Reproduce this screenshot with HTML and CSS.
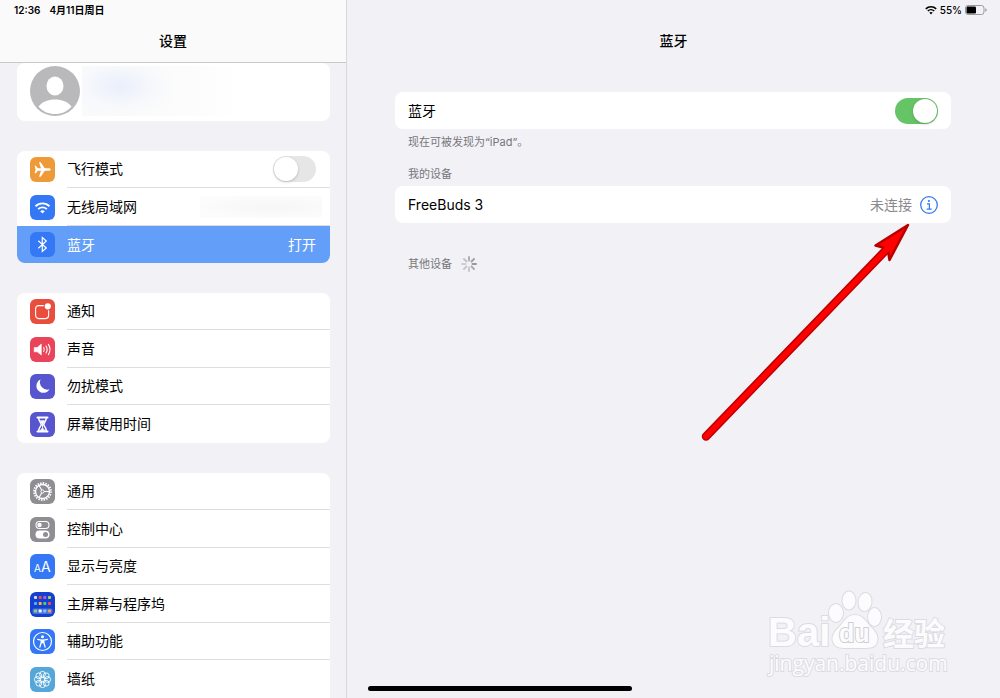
FILE: index.html
```html
<!DOCTYPE html>
<html lang="zh-CN">
<head>
    <meta charset="UTF-8">
    <meta name="viewport" content="width=device-width, initial-scale=1.0">
    <title>设置 - 蓝牙</title>
    <link rel="stylesheet" href="styles.css">
</head>

<body>
    <div class="sidebar">
        <header class="sidebar-header">
            <div class="status">
                <span>12:36</span>
                <span>4月11日周日</span>
            </div>
            <h1 class="title">设置</h1>
        </header>

        <nav class="menu">
            <a class="profile" href="#account" aria-label="Apple ID">
                <svg class="avatar" viewBox="0 0 50 50">
                    <circle cx="25" cy="25" r="25" fill="#b9b9bb"/>
                    <ellipse cx="25" cy="20" rx="8.5" ry="9.5" fill="#fff"/>
                    <path d="M8.5 40.500C12 36 18 33.500 25 33.500S38 36 41.500 40.500C37.500 45.500 31.500 48 25 48S12.500 45.500 8.500 40.500Z" fill="#fff"/>
                </svg>
                <span class="hidden-name"></span>
            </a>

            <div class="group">
                <div class="row">
                    <svg class="icon orange" viewBox="0 0 25 25">
                        <path fill="#fff" d="M20.800 12.500C20.800 11.700 19.500 11.200 18.300 11.200H14.800L10.700 5.200H9L11 11.200H7.700L6 8.800H4.700L5.600 12.500L4.700 16.200H6L7.700 13.800H11L9 19.800H10.700L14.800 13.800H18.300C19.500 13.800 20.800 13.300 20.800 12.500Z"/>
                    </svg>
                    <div class="cell">
                        <label for="airplane">飞行模式</label>
                        <input class="switch" type="checkbox" role="switch" id="airplane">
                    </div>
                </div>
                <a class="row" href="#wifi">
                    <svg class="icon blue" viewBox="0 0 25 25">
                        <g fill="none" stroke="#fff" stroke-width="1.900">
                            <path d="M5.500 11.200A10 10 0 0 1 19.500 11.200"/>
                            <path d="M8.200 14.100A6.200 6.200 0 0 1 16.800 14.100"/>
                        </g>
                        <path d="M10.200 16.200Q12.500 14.400 14.800 16.200L12.500 18.600Z" fill="#fff"/>
                    </svg>
                    <div class="cell">
                        <span>无线局域网</span>
                        <span class="hidden-network"></span>
                    </div>
                </a>
                <a class="row selected" href="#bluetooth" aria-current="page">
                    <svg class="icon blue" viewBox="0 0 25 25">
                        <path d="M8.300 8.800L16.300 16L12.300 19.500V5.500L16.300 9L8.300 16.200" fill="none" stroke="#fff" stroke-width="1.200"/>
                    </svg>
                    <div class="cell">
                        <span>蓝牙</span>
                        <span>打开</span>
                    </div>
                </a>
            </div>

            <div class="group">
                <a class="row" href="#notifications">
                    <svg class="icon red" viewBox="0 0 25 25">
                        <rect x="5.600" y="6.600" width="13" height="13" rx="3" fill="none" stroke="#fff" stroke-width="1.100"/>
                        <circle cx="17.800" cy="7.300" r="4.200" fill="#e94e3d"/>
                        <circle cx="17.800" cy="7.300" r="3.100" fill="#fff"/>
                    </svg>
                    <div class="cell"><span>通知</span></div>
                </a>
                <a class="row" href="#sounds">
                    <svg class="icon pink" viewBox="0 0 25 25">
                        <path d="M4.200 10.500H7.200L11.300 7V18L7.200 14.800H4.200Z" fill="#fff" stroke="#fff" stroke-width=".6" stroke-linejoin="round"/>
                        <g fill="none" stroke="#fff" stroke-width="1.100" stroke-linecap="round">
                            <path d="M13.700 10.600Q15 12.500 13.700 14.400"/>
                            <path d="M16 9Q18.300 12.500 16 16"/>
                            <path d="M18.400 7.400Q21.600 12.500 18.400 17.600"/>
                        </g>
                    </svg>
                    <div class="cell"><span>声音</span></div>
                </a>
                <a class="row" href="#dnd">
                    <svg class="icon indigo" viewBox="0 0 25 25">
                        <path d="M10.500 5.500A7 7 0 1 0 19.500 15.300A7.400 7.400 0 0 1 10.500 5.500Z" fill="#fff"/>
                    </svg>
                    <div class="cell"><span>勿扰模式</span></div>
                </a>
                <a class="row" href="#screen-time">
                    <svg class="icon indigo" viewBox="0 0 25 25">
                        <path d="M7.500 5.500H17.500M7.500 19.500H17.500" stroke="#fff" stroke-width="2" stroke-linecap="round"/>
                        <path d="M8.700 6C8.700 9.500 11.300 11 11.300 12.500S8.700 15.500 8.700 19M16.300 6C16.300 9.500 13.700 11 13.700 12.500S16.300 15.500 16.300 19" fill="none" stroke="#fff" stroke-width="1.500"/>
                        <path d="M10.300 8.700H14.700L12.500 12.500ZM12.500 12.500V16L15 18.700H10L12.500 16Z" fill="#fff" stroke="#fff" stroke-width=".7"/>
                    </svg>
                    <div class="cell"><span>屏幕使用时间</span></div>
                </a>
            </div>

            <div class="group group-last">
                <a class="row" href="#general">
                    <svg class="icon gray" viewBox="0 0 25 25">
                        <g fill="none" stroke="#fff">
                            <circle cx="12.500" cy="12.500" r="8.500" stroke-width="1.800" stroke-dasharray="1.500 1.167"/>
                            <circle cx="12.500" cy="12.500" r="7" stroke-width="1.400"/>
                            <path d="M14 12.500H19M11.800 11.200L9.200 6.700M11.800 13.800L9.200 18.300" stroke-width="1.100"/>
                            <circle cx="12.500" cy="12.500" r="1.600" stroke-width="1"/>
                        </g>
                    </svg>
                    <div class="cell"><span>通用</span></div>
                </a>
                <a class="row" href="#control-center">
                    <svg class="icon gray" viewBox="0 0 25 25">
                        <rect x="6" y="4.500" width="13" height="7" rx="3.500" fill="none" stroke="#fff" stroke-width="1.100"/>
                        <circle cx="9.500" cy="8" r="2.200" fill="#fff"/>
                        <rect x="5.500" y="13.500" width="14" height="8" rx="4" fill="#fff"/>
                        <circle cx="15.500" cy="17.500" r="2.500" fill="#8e8e93"/>
                    </svg>
                    <div class="cell"><span>控制中心</span></div>
                </a>
                <a class="row" href="#display">
                    <svg class="icon blue" viewBox="0 0 25 25">
                        <text class="small-a" x="4" y="18">A</text>
                        <text class="large-a" x="11" y="18">A</text>
                    </svg>
                    <div class="cell"><span>显示与亮度</span></div>
                </a>
                <a class="row" href="#home-screen">
                    <svg class="icon navy" viewBox="0 0 25 25">
                        <rect x="2.500" y="16.500" width="20" height="5.500" rx="1.500" fill="#4d70df"/>
                        <g>
                            <rect x="4" y="4" width="3" height="3" rx=".7" fill="#d7dcda"/>
                            <rect x="8.700" y="4" width="3" height="3" rx=".7" fill="#ef4d4b"/>
                            <rect x="13.300" y="4" width="3" height="3" rx=".7" fill="#b15ce5"/>
                            <rect x="18" y="4" width="3" height="3" rx=".7" fill="#a6cf54"/>
                            <rect x="4" y="10" width="3" height="3" rx=".7" fill="#48b5ef"/>
                            <rect x="8.700" y="10" width="3" height="3" rx=".7" fill="#f1b33f"/>
                            <rect x="13.300" y="10" width="3" height="3" rx=".7" fill="#68c367"/>
                            <rect x="18" y="10" width="3" height="3" rx=".7" fill="#ee4e43"/>
                            <rect x="4" y="17.500" width="3" height="3" rx=".7" fill="#81d675"/>
                            <rect x="8.700" y="17.500" width="3" height="3" rx=".7" fill="#f5f5f5"/>
                            <rect x="13.300" y="17.500" width="3" height="3" rx=".7" fill="#79c8f5"/>
                            <rect x="18" y="17.500" width="3" height="3" rx=".7" fill="#f4a250"/>
                        </g>
                    </svg>
                    <div class="cell"><span>主屏幕与程序坞</span></div>
                </a>
                <a class="row" href="#accessibility">
                    <svg class="icon blue" viewBox="0 0 25 25">
                        <circle cx="12.500" cy="12.500" r="9" fill="none" stroke="#fff" stroke-width="1.200"/>
                        <circle cx="12.500" cy="7.700" r="1.500" fill="#fff"/>
                        <path d="M7.700 10.400L11.200 11.100V13.500L9.900 18.200M17.300 10.400L13.800 11.100V13.500L15.100 18.200" fill="none" stroke="#fff" stroke-width="1.300" stroke-linecap="round" stroke-linejoin="round"/>
                        <path d="M11 10.500H14V14.200H11Z" fill="#fff"/>
                    </svg>
                    <div class="cell"><span>辅助功能</span></div>
                </a>
                <a class="row" href="#wallpaper">
                    <svg class="icon sky" viewBox="0 0 25 25">
                        <g fill="none" stroke="#fff" stroke-width=".9">
                            <circle cx="12.500" cy="12.500" r="2.200"/>
                            <circle cx="17.700" cy="12.500" r="2.900"/>
                            <circle cx="16.200" cy="16.200" r="2.900"/>
                            <circle cx="12.500" cy="17.700" r="2.900"/>
                            <circle cx="8.800" cy="16.200" r="2.900"/>
                            <circle cx="7.300" cy="12.500" r="2.900"/>
                            <circle cx="8.800" cy="8.800" r="2.900"/>
                            <circle cx="12.500" cy="7.300" r="2.900"/>
                            <circle cx="16.200" cy="8.800" r="2.900"/>
                        </g>
                    </svg>
                    <div class="cell"><span>墙纸</span></div>
                </a>
            </div>
        </nav>
    </div>

    <main class="content">
        <header class="content-header">
            <div class="status status-right">
                <svg class="status-wifi" viewBox="0 0 12 10">
                    <g fill="none" stroke="#000" stroke-width="1.600">
                        <path d="M.8 3.800A7.500 7.500 0 0 1 11.200 3.800"/>
                        <path d="M2.800 6A4.600 4.600 0 0 1 9.200 6"/>
                    </g>
                    <path d="M4.300 7.600Q6 6.300 7.700 7.600L6 9.400Z"/>
                </svg>
                <span>55%</span>
                <svg class="battery" viewBox="0 0 22 10">
                    <rect x=".5" y=".5" width="18.500" height="9" rx="2.500" fill="none" stroke="#9b9b9f"/>
                    <rect x="1.500" y="1.500" width="9.500" height="7" rx="1.200"/>
                    <path d="M20.300 3.300Q21.800 3.800 21.800 5T20.300 6.700Z" fill="#9b9b9f"/>
                </svg>
            </div>
            <h2 class="title">蓝牙</h2>
        </header>

        <div class="panel">
            <section class="card">
                <label for="bluetooth-switch">蓝牙</label>
                <input class="switch" type="checkbox" role="switch" id="bluetooth-switch" checked>
            </section>
            <p class="note">现在可被发现为“iPad”。</p>

            <h3 class="note">我的设备</h3>
            <section class="card">
                <span class="device">FreeBuds 3</span>
                <span class="state">未连接</span>
                <button class="info" type="button" aria-label="FreeBuds 3 详细信息">
                    <svg viewBox="0 0 18 18">
                        <circle cx="9" cy="9" r="8.300" fill="none" stroke="#3478f6" stroke-width="1.300"/>
                        <circle cx="8.900" cy="5" r="1.100" fill="#3478f6"/>
                        <path d="M7 7.800H9.400V13M6.700 13.200H11.700" fill="none" stroke="#3478f6" stroke-width="1.200"/>
                    </svg>
                </button>
            </section>

            <h3 class="note others">
                其他设备
                <svg class="spinner" viewBox="0 0 18 18">
                    <g stroke-width="2" stroke-linecap="round">
                        <path d="M9 5.500V2" stroke="#b0b0b4"/>
                        <path d="M11.500 6.500L14 4" stroke="#a3a3a7"/>
                        <path d="M12.500 9H16" stroke="#98989c"/>
                        <path d="M11.500 11.500L14 14" stroke="#acacb0"/>
                        <path d="M9 12.500V16" stroke="#c8c8cc"/>
                        <path d="M6.500 11.500L4 14" stroke="#c8c8cc"/>
                        <path d="M5.500 9H2" stroke="#cfcfd3"/>
                        <path d="M6.500 6.500L4 4" stroke="#c3c3c7"/>
                    </g>
                </svg>
            </h3>
        </div>

        <svg class="arrow" viewBox="0 0 210 220">
            <path d="M5 214.500L186 27" stroke="#b80000" stroke-width="8.500" stroke-linecap="round"/>
            <path d="M207 3L174.500 23.500L184 26L187 29L188.500 38Z" fill="#f00" stroke="#b80000" stroke-width="2.500" stroke-linejoin="round"/>
            <path d="M5 214.500L190 23" stroke="#f00" stroke-width="5.500" stroke-linecap="round"/>
        </svg>

        <svg class="watermark" viewBox="0 0 190 94">
            <text class="mark-latin" x="5" y="60">Bai</text>
            <g class="mark-paw">
                <ellipse cx="73" cy="27" rx="7" ry="9"/>
                <ellipse cx="86" cy="14.500" rx="6.500" ry="9"/>
                <ellipse cx="102" cy="16" rx="6.500" ry="9" transform="rotate(8 102 16)"/>
                <ellipse cx="111.500" cy="31" rx="6.500" ry="9"/>
                <path d="M92 29C99 29 102 34 106 39C112 45 116 49 114 56C112 63 106 62 92 62S73 63 70 56C68 49 72 45 78 39C82 34 85 29 92 29Z"/>
            </g>
            <text class="mark-du" x="76" y="56">du</text>
            <text class="mark-cjk" x="120" y="59">经验</text>
            <text class="mark-url" x="6" y="85">jingyan.baidu.com</text>
        </svg>
    </main>

    <div class="home-bar"></div>
</body>
</html>
```

FILE: styles.css
```css
*{
    box-sizing: border-box;
}

body{
    margin: 0;
    display: flex;
    height: 100vh;
    overflow: hidden;
    background-color: #f2f1f6;
    color: #000;
    font-family: Inter, "Noto Sans CJK SC", sans-serif;
    font-size: 14px;
    line-height: 20px;
}

a{
    color: inherit;
    text-decoration: none;
}

/* left column */
.sidebar{
    flex: 0 0 347px;
    display: flex;
    flex-direction: column;
    border-right: 1px solid #d8d8dc;
    overflow: hidden;
}

.sidebar-header{
    flex: none;
    height: 63px;
    background-color: #fafafa;
    border-bottom: 1px solid #c9c9cd;
}

.status{
    display: flex;
    align-items: center;
    gap: 9px;
    height: 20px;
    padding: 0 14px;
    font-size: 10px;
    font-weight: 600;
}

.status-right{
    justify-content: flex-end;
    gap: 3px;
    padding-right: 13px;
    font-weight: 500;
}

.status-wifi{
    width: 12px;
    height: 10px;
}

.battery{
    width: 22px;
    height: 10px;
}

.title{
    margin: 11px 0 0;
    font-size: 14px;
    font-weight: 500;
    line-height: 20px;
    text-align: center;
}

.menu{
    flex: 1;
    display: flex;
    flex-direction: column;
    gap: 30px;
    padding: 0 16px 0 17px;
    min-height: 0;
}

.profile{
    flex: none;
    display: flex;
    align-items: center;
    gap: 2px;
    padding: 3px 13px 5px;
    background-color: #fff;
    border-radius: 8px;
}

.avatar{
    width: 50px;
    height: 50px;
}

.hidden-name{
    width: 158px;
    height: 50px;
    background: radial-gradient(ellipse 60px 34px at 24% 40%, #e9effb, rgba(246, 248, 252, 0.6) 65%, transparent), linear-gradient(to right, #fafafb, #fcfcfc 70%, #fff);
}

.group{
    flex: none;
    background-color: #fff;
    border-radius: 8px;
    overflow: hidden;
}

.group-last{
    flex: 1 0 auto;
    border-radius: 8px 8px 0 0;
}

.row{
    display: flex;
    align-items: center;
    gap: 12px;
    height: 37px;
    padding-left: 13px;
}

.row:nth-child(even){
    height: 38px;
}

.icon{
    flex: none;
    width: 25px;
    height: 25px;
    border-radius: 6px;
}

.orange{ background-color: #ef9a38; }
.blue{ background-color: #3478f6; }
.red{ background-color: #e94e3d; }
.pink{ background-color: #e9445a; }
.indigo{ background-color: #5756ce; }
.gray{ background-color: #8e8e93; }
.navy{ background-color: #153fd0; }
.sky{ background-color: #55a6d9; }

.small-a, .large-a{
    fill: #fff;
    font-size: 10px;
}

.large-a{
    font-size: 14px;
}

.cell{
    flex: 1;
    display: flex;
    align-items: center;
    justify-content: space-between;
    height: 100%;
    padding-right: 14px;
    border-bottom: 1px solid #dededf;
}

.group .row:last-child .cell{
    border-bottom: 0;
}

.selected{
    background-color: #639ff8;
    color: #fff;
}

.hidden-network{
    width: 122px;
    height: 22px;
    margin-right: -6px;
    background: radial-gradient(ellipse at 60% 50%, #f6f6f6, #fcfcfc 75%);
}

.switch{
    appearance: none;
    display: flex;
    width: 43px;
    height: 26px;
    margin: 0;
    padding: 1px;
    border-radius: 13px;
    background-color: #e6e6e7;
}

.switch::before{
    content: "";
    width: 24px;
    height: 24px;
    border-radius: 50%;
    background-color: #fff;
    box-shadow: 0 1px 3px rgba(0, 0, 0, 0.2);
}

.switch:checked{
    justify-content: flex-end;
    background-color: #65c466;
}

/* right column */
.content{
    position: relative;
    flex: 1;
    min-width: 0;
}

.content-header{
    height: 63px;
}

.panel{
    padding: 29px 49px 0 48px;
}

.card{
    display: flex;
    align-items: center;
    height: 37px;
    padding: 0 13px;
    background-color: #fff;
    border-radius: 8px;
}

.card .switch{
    margin-left: auto;
}

.note{
    margin: 5px 13px 16px;
    color: #76767b;
    font-size: 11px;
    font-weight: 400;
    line-height: 16px;
}

h3.note{
    margin-bottom: 4px;
}

.state{
    margin-left: auto;
    color: #8a8a8e;
}

.info{
    display: flex;
    margin-left: 8px;
    padding: 0;
    border: 0;
    background: none;
}

.info svg{
    width: 18px;
    height: 18px;
}

.others{
    display: flex;
    align-items: center;
    gap: 8px;
    margin-top: 32px;
}

.spinner{
    width: 18px;
    height: 18px;
}

.arrow{
    position: absolute;
    top: 222px;
    right: 89px;
    width: 210px;
    height: 220px;
}

.watermark{
    position: absolute;
    right: 47px;
    bottom: 18px;
    width: 190px;
    height: 94px;
    fill: #fcfcfe;
    stroke: #dcdce0;
    stroke-width: 2px;
    paint-order: stroke;
}

.mark-latin{
    font: bold 40px "Liberation Sans", sans-serif;
}

.mark-du{
    stroke: #cfcfd3;
    font: bold 25px "Liberation Sans", sans-serif;
}

.mark-cjk{
    font: bold 31px "Noto Sans CJK SC", sans-serif;
}

.mark-url{
    font: 21px "Open Sans", sans-serif;
}

.home-bar{
    position: fixed;
    bottom: 7px;
    left: 50%;
    width: 264px;
    height: 5px;
    margin-left: -132px;
    border-radius: 3px;
    background-color: #000;
}
```
